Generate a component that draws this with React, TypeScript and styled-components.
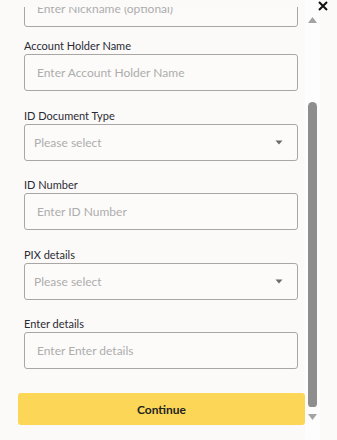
import { FC, useLayoutEffect, useRef } from 'react'
import styled, { createGlobalStyle } from 'styled-components'

const GlobalStyle = createGlobalStyle`
  html, body {
    margin: 0;
    padding: 0;
    background-color: #fbfaf9;
  }
  body {
    font-family: Lato, 'Liberation Sans', sans-serif;
  }
`

type FieldProps = {
  label: string
  placeholder: string
  select?: boolean
  gap?: number
}

const Field: FC<FieldProps> = ({ label, placeholder, select, gap }) => (
  <FieldBox $gap={gap}>
    <Label>{label}</Label>
    {select ? (
      <SelectBox>
        <span>{placeholder}</span>
        <svg width='8' height='5' viewBox='0 0 8 5'>
          <path d='M0.5 0.5 H7.5 L4 4.5 Z' fill='#6b6b6b' />
        </svg>
      </SelectBox>
    ) : (
      <Input placeholder={placeholder} />
    )}
  </FieldBox>
)

export default function App() {
  const scrollRef = useRef<HTMLDivElement>(null)

  // the sheet is shown scrolled down to the button
  useLayoutEffect(() => {
    const el = scrollRef.current
    if (el) el.scrollTop = el.scrollHeight
  }, [])

  return (
    <>
      <GlobalStyle />
      <Screen>
        <Sheet>
          <ScrollArea ref={scrollRef}>
            <Field label='Nickname' placeholder='Enter Nickname (optional)' gap={11} />
            <Field label='Account Holder Name' placeholder='Enter Account Holder Name' />
            <Field label='ID Document Type' placeholder='Please select' select />
            <Field label='ID Number' placeholder='Enter ID Number' />
            <Field label='PIX details' placeholder='Please select' select />
            <Field label='Enter details' placeholder='Enter Enter details' gap={0} />
            <ContinueButton>Continue</ContinueButton>
          </ScrollArea>
        </Sheet>
        <Scrollbar>
          <Arrow viewBox='0 0 9 6'>
            <path d='M4.5 0 L9 6 H0 Z' fill='#a3a3a3' />
          </Arrow>
          <Thumb />
          <Arrow viewBox='0 0 9 6'>
            <path d='M0 0 H9 L4.5 6 Z' fill='#a3a3a3' />
          </Arrow>
        </Scrollbar>
        <CloseButton aria-label='Close'>
          <svg width='10' height='10' viewBox='0 0 10 10'>
            <path d='M1 1 L9 9 M9 1 L1 9' stroke='#111' strokeWidth='2' />
          </svg>
        </CloseButton>
      </Screen>
    </>
  )
}

const Screen = styled.div`
  position: relative;
  display: flex;
  width: 337px;
  height: 440px;
  overflow: hidden;
  background-color: #fbfaf9;
`

const Sheet = styled.div`
  width: 305px;
  height: 100%;
  box-sizing: border-box;
  padding-top: 7px;
  display: flex;
  flex-direction: column;
`

const ScrollArea = styled.div`
  flex: 1;
  min-height: 0;
  overflow-y: auto;
  scrollbar-width: none;
  box-sizing: border-box;
  padding: 0 0 15px 0;
  display: flex;
  flex-direction: column;

  &::-webkit-scrollbar {
    display: none;
  }
`

const FieldBox = styled.div<{ $gap?: number }>`
  flex: none;
  display: flex;
  flex-direction: column;
  margin: 0 7px ${({ $gap }) => ($gap ?? 16.5)}px 24px;
`

const Label = styled.div`
  height: 16px;
  line-height: 16px;
  font-size: 11px;
  color: #2b2a33;
`

const Input = styled.input`
  height: 37px;
  box-sizing: border-box;
  padding: 0 12px;
  border: 1px solid #a9a7a5;
  border-radius: 3px;
  background-color: #fcfbfa;
  font-family: inherit;
  font-size: 12px;
  color: #333;
  outline: none;

  &::placeholder {
    color: #adadad;
  }
`

const SelectBox = styled.div`
  height: 37px;
  box-sizing: border-box;
  padding: 0 14px 0 9px;
  display: flex;
  align-items: center;
  justify-content: space-between;
  border: 1px solid #a9a7a5;
  border-radius: 3px;
  background-color: #fcfbfa;
  font-size: 12px;
  color: #adadad;
`

const ContinueButton = styled.button`
  flex: none;
  height: 32px;
  margin: 24px 0 0 18px;
  border: none;
  border-radius: 3px;
  background-color: #fcd757;
  font-family: inherit;
  font-size: 12px;
  font-weight: 700;
  color: #222;
`

const Scrollbar = styled.div`
  width: 15px;
  height: 100%;
  box-sizing: border-box;
  padding: 17px 0 19px;
  display: flex;
  flex-direction: column;
  align-items: center;
  background-color: #fdfdfd;
`

const Arrow = styled.svg`
  flex: none;
  width: 9px;
  height: 6px;
`

const Thumb = styled.div`
  flex: none;
  width: 9px;
  height: 305px;
  margin: 79px 0 7px;
  border-radius: 5px 5px 4px 4px;
  background-color: #8e8e8e;
`

const CloseButton = styled.button`
  position: absolute;
  top: 0;
  right: 9px;
  padding: 0;
  width: 11px;
  height: 11px;
  border: none;
  background: none;
  display: flex;
  align-items: center;
  justify-content: center;
`
